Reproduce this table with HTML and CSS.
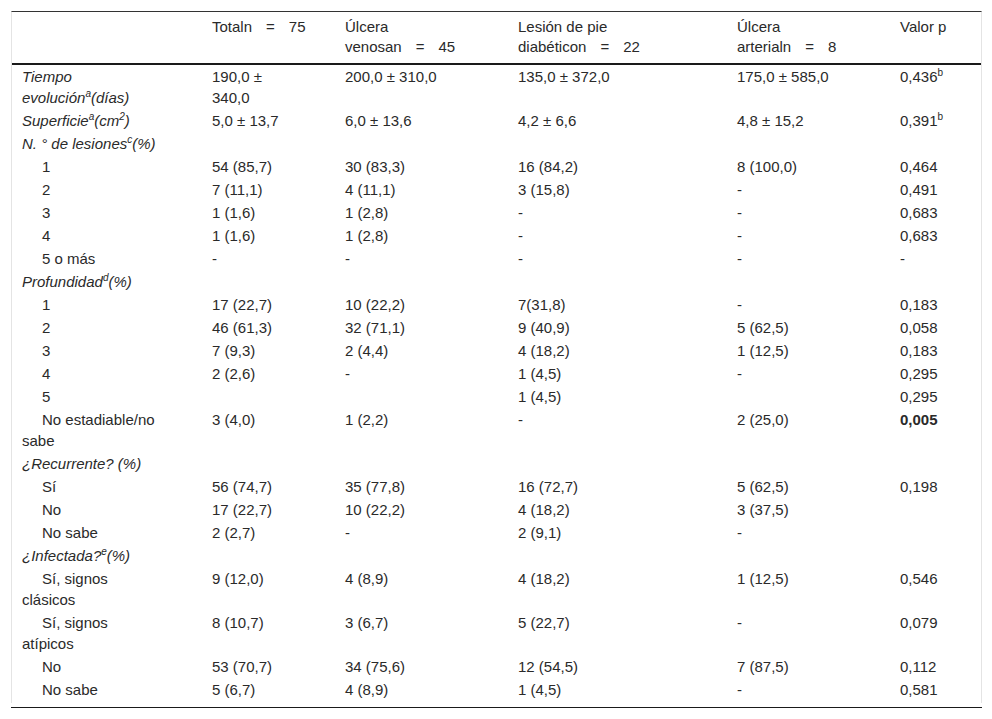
FILE: index.html
```html
<!DOCTYPE html>
<html lang="es">
<head>
<meta charset="utf-8">
<title>Tabla</title>
<link rel="stylesheet" href="styles.css">
</head>
<body>
<div class="wrap">
<table class="tbl">
<colgroup>
<col class="c1"><col class="c2"><col class="c3"><col class="c4"><col class="c5"><col class="c6">
</colgroup>
<thead>
<tr>
<th></th>
<th>Totaln<span class="eq">=</span>75</th>
<th>Úlcera venosan<span class="eq">=</span>45</th>
<th>Lesión de pie diabéticon<span class="eq">=</span>22</th>
<th>Úlcera arterialn<span class="eq">=</span>8</th>
<th>Valor p</th>
</tr>
</thead>
<tbody>
<tr><td><em>Tiempo evolución<sup>a</sup>(días)</em></td><td>190,0 ± 340,0</td><td>200,0 ± 310,0</td><td>135,0 ± 372,0</td><td>175,0 ± 585,0</td><td>0,436<sup>b</sup></td></tr>
<tr><td><em>Superficie<sup>a</sup>(cm<sup>2</sup>)</em></td><td>5,0 ± 13,7</td><td>6,0 ± 13,6</td><td>4,2 ± 6,6</td><td>4,8 ± 15,2</td><td>0,391<sup>b</sup></td></tr>
<tr><td><em>N. ° de lesiones<sup>c</sup>(%)</em></td><td></td><td></td><td></td><td></td><td></td></tr>
<tr><td class="ind">1</td><td>54 (85,7)</td><td>30 (83,3)</td><td>16 (84,2)</td><td>8 (100,0)</td><td>0,464</td></tr>
<tr><td class="ind">2</td><td>7 (11,1)</td><td>4 (11,1)</td><td>3 (15,8)</td><td>-</td><td>0,491</td></tr>
<tr><td class="ind">3</td><td>1 (1,6)</td><td>1 (2,8)</td><td>-</td><td>-</td><td>0,683</td></tr>
<tr><td class="ind">4</td><td>1 (1,6)</td><td>1 (2,8)</td><td>-</td><td>-</td><td>0,683</td></tr>
<tr><td class="ind">5 o más</td><td>-</td><td>-</td><td>-</td><td>-</td><td>-</td></tr>
<tr><td><em>Profundidad<sup>d</sup>(%)</em></td><td></td><td></td><td></td><td></td><td></td></tr>
<tr><td class="ind">1</td><td>17 (22,7)</td><td>10 (22,2)</td><td>7(31,8)</td><td>-</td><td>0,183</td></tr>
<tr><td class="ind">2</td><td>46 (61,3)</td><td>32 (71,1)</td><td>9 (40,9)</td><td>5 (62,5)</td><td>0,058</td></tr>
<tr><td class="ind">3</td><td>7 (9,3)</td><td>2 (4,4)</td><td>4 (18,2)</td><td>1 (12,5)</td><td>0,183</td></tr>
<tr><td class="ind">4</td><td>2 (2,6)</td><td>-</td><td>1 (4,5)</td><td>-</td><td>0,295</td></tr>
<tr><td class="ind">5</td><td></td><td></td><td>1 (4,5)</td><td></td><td>0,295</td></tr>
<tr><td class="ind">No estadiable/no sabe</td><td>3 (4,0)</td><td>1 (2,2)</td><td>-</td><td>2 (25,0)</td><td><strong>0,005</strong></td></tr>
<tr><td><em>¿Recurrente? (%)</em></td><td></td><td></td><td></td><td></td><td></td></tr>
<tr><td class="ind">Sí</td><td>56 (74,7)</td><td>35 (77,8)</td><td>16 (72,7)</td><td>5 (62,5)</td><td>0,198</td></tr>
<tr><td class="ind">No</td><td>17 (22,7)</td><td>10 (22,2)</td><td>4 (18,2)</td><td>3 (37,5)</td><td></td></tr>
<tr><td class="ind">No sabe</td><td>2 (2,7)</td><td>-</td><td>2 (9,1)</td><td>-</td><td></td></tr>
<tr><td><em>¿Infectada?<sup>e</sup>(%)</em></td><td></td><td></td><td></td><td></td><td></td></tr>
<tr><td class="ind">Sí, signos clásicos</td><td>9 (12,0)</td><td>4 (8,9)</td><td>4 (18,2)</td><td>1 (12,5)</td><td>0,546</td></tr>
<tr><td class="ind">Sí, signos atípicos</td><td>8 (10,7)</td><td>3 (6,7)</td><td>5 (22,7)</td><td>-</td><td>0,079</td></tr>
<tr><td class="ind">No</td><td>53 (70,7)</td><td>34 (75,6)</td><td>12 (54,5)</td><td>7 (87,5)</td><td>0,112</td></tr>
<tr><td class="ind">No sabe</td><td>5 (6,7)</td><td>4 (8,9)</td><td>1 (4,5)</td><td>-</td><td>0,581</td></tr>
</tbody>
</table>
</div>
<div class="rule"></div>
</body>
</html>
```
FILE: styles.css
```css
html, body {
  background: #ffffff;
}
body {
  margin: 11px 10px 0 11px;
  font-family: "Liberation Sans", Arial, sans-serif;
  font-size: 15px;
  color: #2a2a2a;
}
.wrap {
  border-top: 1px solid #333333;
  border-left: 1px solid #e4e4e4;
  border-right: 1px solid #e4e4e4;
  padding-bottom: 2px;
}
.tbl {
  width: 100%;
  border-collapse: collapse;
  table-layout: fixed;
}
.c1 { width: 190px; }
.c2 { width: 133px; }
.c3 { width: 173px; }
.c4 { width: 219px; }
.c5 { width: 163px; }
.c6 { width: 91px; }
.tbl th {
  font-weight: normal;
  text-align: left;
  vertical-align: top;
  line-height: 20px;
  padding: 5px 35px 6px 10px;
  border-bottom: 2px solid #1a1a1a;
}
.tbl td {
  vertical-align: top;
  line-height: 21px;
  padding: 1px 35px 1px 10px;
}
.tbl td:first-child {
  padding-right: 42px;
}
.tbl th:last-child,
.tbl td:last-child {
  padding-right: 8px;
}
.eq {
  margin: 0 14px;
}
.ind {
  text-indent: 20px;
}
sup {
  font-size: 10px;
  line-height: 0;
  vertical-align: 6px;
}
strong {
  font-weight: bold;
}
.rule {
  margin-top: 4px;
  border-top: 1px solid #1a1a1a;
}
```
